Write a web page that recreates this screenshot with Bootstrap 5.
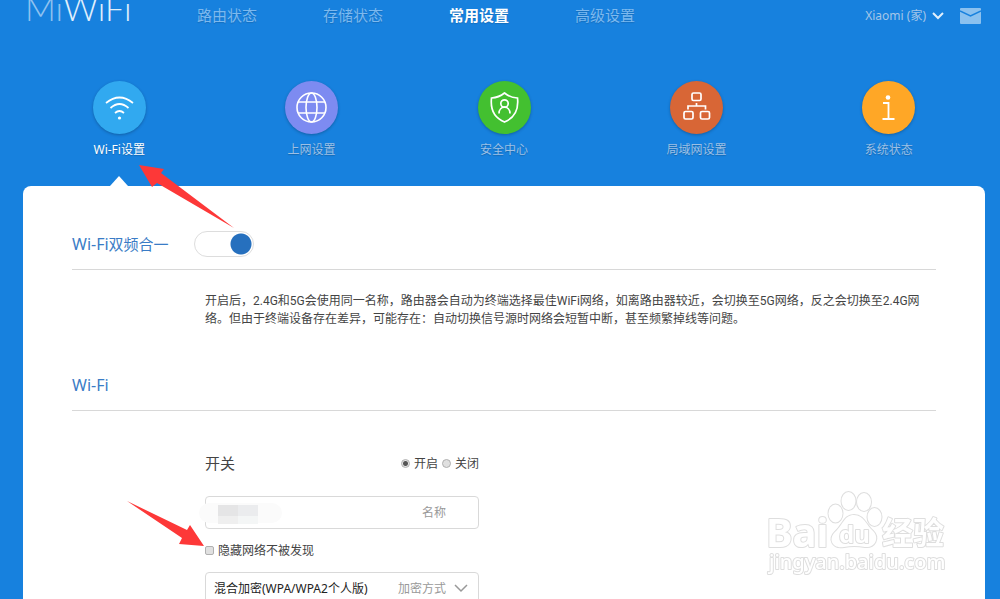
<!DOCTYPE html>
<html lang="zh-CN">
<head>
<meta charset="utf-8">
<meta name="viewport" content="width=device-width, initial-scale=1">
<title>MiWiFi</title>
<link href="https://cdn.jsdelivr.net/npm/bootstrap@5.3.0/dist/css/bootstrap.min.css" rel="stylesheet">
<style>
body { background: #1781de; font: 12px/18px "Noto Sans", "Noto Sans CJK SC", sans-serif; color: #444; min-height: 100vh; overflow-x: hidden; }
a { text-decoration: none; }
.topbar { height: 32px; overflow: hidden; padding: 0 19px 0 25px; }
.brand { width: 172px; font: 300 34px/24px Lato, sans-serif; color: #e0effc; white-space: nowrap; margin-top: -4px; }
.brand span { color: #8fc2f0; }
.mainnav { gap: 66px; font-size: 15px; line-height: 30px; }
.mainnav a { color: #7cb9ef; text-shadow: 0 1px 1px rgba(0,0,0,.15); }
.mainnav a.active { color: #fff; font-weight: 700; }
.account { color: #a5c6e8; gap: 16px; }
.account button { color: inherit; font-size: 12px; line-height: 18px; gap: 6px; }
.page { margin: 0 15px 0 23px; }
.tabs { padding-top: 49px; height: 154px; }
.tabs a { flex: 1 1 0; color: #9cc0e6; gap: 7px; text-shadow: 0 1px 1px rgba(0,0,0,.2); }
.tabs a.active { color: #fff; position: relative; }
.tabs a.active::after { content: ""; position: absolute; bottom: 0; border: 9px solid transparent; border-top: 0; border-bottom: 10px solid #fff; }
.disc { width: 53px; height: 53px; border-radius: 50%; box-shadow: 0 1px 3px rgba(0,0,0,.25); }
.disc svg { display: block; }
.c-wifi { background: #31a9f0; } .c-net { background: #7d8bf1; } .c-safe { background: #43c030; }
.c-lan { background: #d86636; } .c-info { background: #ffa726; }
.panel { background: #fff; border-radius: 8px 8px 0 0; padding: 33px 49px 40px; min-height: calc(100vh - 186px); }
.sect { height: 51px; border-bottom: 1px solid #d8d8d8; gap: 25px; }
.sect h2, .sect label { font-size: 15px; line-height: 22px; color: #3a7cc6; margin: 0; font-weight: 400; }
.sect .latin { font-size: 16px; }
.sect .form-check-input { width: 60px; height: 26px; margin: 0; border: 1px solid #ddd; border-radius: 13px; background: #fff radial-gradient(circle at 46px 12px, #2670be 10px, transparent 11px) 0 0 / 100% 100% no-repeat; }
.inset { padding-left: 133px; }
.desc { margin: 22px 0 32px; padding-right: 12px; font-family: Roboto, "Noto Sans CJK SC", sans-serif; }
.fields { width: 274px; }
.power { height: 24px; margin: 40px 0 21px; }
.power > span { font-size: 15px; }
.fields label { padding-top: 1px; }
.tiny { appearance: none; width: 9px; height: 9px; margin: 0 4px 0 0; border: 1px solid #b0b0b0; background: #e0e0e0; flex: none; }
.tiny[type=radio] { border-radius: 50%; }
.tiny[type=radio]:checked { background: radial-gradient(circle, #555 2px, #e4e4e4 3px); }
.tiny[type=checkbox] { border-radius: 2px; }
.field { height: 33px; border: 1px solid #d9d9d9; border-radius: 4px; position: relative; }
.field label { color: #999; white-space: nowrap; }
.field input, .field select { border: 0; background: none; appearance: none; font-size: 12px; color: #222; min-width: 0; outline: 0; padding: 1px 0 0 8px; }
.smudge { position: absolute; left: -7px; top: 6px; }
.arrow-a { position: absolute; left: 116px; top: -21px; }
.arrow-b { position: absolute; left: -79px; top: 50px; }
.mark-logo { position: fixed; right: 48px; bottom: 20px; pointer-events: none; }
</style>
</head>
<body>
<header class="topbar d-flex align-items-start">
  <a class="brand" href="#"><span>Mi</span>WiFi</a>
  <nav class="mainnav d-flex">
    <a href="#">路由状态</a><a href="#">存储状态</a><a href="#" class="active">常用设置</a><a href="#">高级设置</a>
  </nav>
  <div class="account d-flex align-items-center ms-auto h-100">
    <button type="button" class="btn p-0 border-0 d-flex align-items-center">Xiaomi (家)
      <svg width="12" height="8" fill="none" stroke="#e0effc" stroke-width="2"><path d="M1 1l5 5 5-5"/></svg>
    </button>
    <a href="#" aria-label="消息" class="d-flex"><svg width="21" height="16"><rect width="21" height="16" rx="1" fill="#8bc1ef"/><path d="M0 3l10.500 5L21 3" fill="none" stroke="#1781de" stroke-width="1.500"/></svg></a>
  </div>
</header>
<div class="page">
  <nav class="tabs d-flex">
    <a href="#" class="active d-flex flex-column align-items-center"><span class="disc c-wifi"><svg viewBox="0 0 53 53" fill="none" stroke="#fff" stroke-width="1.700"><path d="M13 22Q26.500 11 40 22M17.500 27Q26.500 19 35.500 27M22 32Q26.500 28 31 32"/><circle cx="26.500" cy="37" r="1.600" fill="#fff" stroke="none"/></svg></span>Wi-Fi设置</a>
    <a href="#" class="d-flex flex-column align-items-center"><span class="disc c-net"><svg viewBox="0 0 53 53" fill="none" stroke="#fff" stroke-width="1.600"><circle cx="26.500" cy="26.500" r="14.500"/><ellipse cx="26.500" cy="26.500" rx="5.500" ry="14.500"/><path d="M13 21H40M13 32H40"/></svg></span>上网设置</a>
    <a href="#" class="d-flex flex-column align-items-center"><span class="disc c-safe"><svg viewBox="0 0 53 53" fill="none" stroke="#fff" stroke-width="1.700"><path d="M26.500 12Q32 16.500 39.500 17Q41.500 35 26.500 41Q11.500 35 13.500 17Q21 16.500 26.500 12Z"/><circle cx="26.500" cy="22.500" r="3.700"/><path d="M21 32.500C21 24 32 24 32 32.500"/></svg></span>安全中心</a>
    <a href="#" class="d-flex flex-column align-items-center"><span class="disc c-lan"><svg viewBox="0 0 53 53" fill="none" stroke="#fff" stroke-width="1.700"><rect x="22" y="12" width="9" height="7.500" rx="1.500"/><rect x="14" y="30.500" width="9" height="7.500" rx="1.500"/><rect x="30.500" y="30.500" width="9" height="7.500" rx="1.500"/><path d="M18 28.500V25H35.500V28.500M26.500 25V22"/></svg></span>局域网设置</a>
    <a href="#" class="d-flex flex-column align-items-center"><span class="disc c-info"><svg viewBox="0 0 53 53" fill="none" stroke="#fff" stroke-width="1.800"><circle cx="26" cy="16.500" r="2.300" fill="#fff" stroke="none"/><path d="M21 22H26.500V38M20.500 38H32.500"/></svg></span>系统状态</a>
  </nav>
  <main class="panel position-relative">
    <svg class="arrow-a" width="96" height="64"><path d="M0 0L25 4 22 8 95 63 18 18 13 22Z" fill="#fd3838"/></svg>
    <div class="sect d-flex align-items-center">
      <label for="band"><span class="latin">Wi-Fi</span>双频合一</label>
      <input class="form-check-input" type="checkbox" role="switch" id="band" checked>
    </div>
    <p class="inset desc">开启后，2.4G和5G会使用同一名称，路由器会自动为终端选择最佳WiFi网络，如离路由器较近，会切换至5G网络，反之会切换至2.4G网络。但由于终端设备存在差异，可能存在：自动切换信号源时网络会短暂中断，甚至频繁掉线等问题。</p>
    <div class="sect d-flex align-items-center"><h2 class="latin">Wi-Fi</h2></div>
    <form class="inset">
      <div class="fields position-relative">
        <div class="power d-flex align-items-center">
          <span class="me-auto">开关</span>
          <input class="tiny" type="radio" name="power" id="on" checked><label for="on" class="me-1">开启</label>
          <input class="tiny" type="radio" name="power" id="off"><label for="off">关闭</label>
        </div>
        <div class="field d-flex align-items-center">
          <input class="flex-grow-1" type="text" id="ssid"><label for="ssid" class="pe-2 me-4">名称</label>
          <svg class="smudge" width="84" height="22"><rect width="83" height="20" rx="10" fill="#fbfbfb"/><path d="M19 2h20v11H19z" fill="#e5e5e6"/><path d="M39 2h20v11H39z" fill="#ebecee"/><path d="M19 13h20v8H19z" fill="#efefef"/><path d="M39 13h20v8H39z" fill="#f4f6f6"/></svg>
        </div>
        <div class="d-flex align-items-center my-2 py-1">
          <input class="tiny" type="checkbox" id="hide"><label for="hide">隐藏网络不被发现</label>
        </div>
        <div class="field d-flex align-items-center">
          <select class="flex-grow-1" id="enc"><option>混合加密(WPA/WPA2个人版)</option></select>
          <label for="enc">加密方式</label>
          <svg class="mx-2" width="16" height="9" fill="none" stroke="#999" stroke-width="1.500"><path d="M1 1l6 6 6-6"/></svg>
        </div>
        <svg class="arrow-b" width="80" height="48"><path d="M1 0L61 29 64 24 78 45 53 43 56 37Z" fill="#fd3838"/></svg>
      </div>
    </form>
  </main>
</div>
<svg class="mark-logo" width="188" height="90" fill="#fff" stroke="#dedede" stroke-width="2" paint-order="stroke" stroke-linejoin="round" font-family="'Noto Sans','Noto Sans CJK SC',sans-serif" font-weight="700">
  <g><ellipse cx="71.500" cy="24.500" rx="7" ry="9"/><ellipse cx="84.500" cy="12" rx="7" ry="9"/><ellipse cx="100" cy="13" rx="7" ry="9"/><ellipse cx="110.500" cy="28" rx="7" ry="9"/>
  <path d="M90 26C100 26 102 36 109 42C116 49 111 59 101 58Q90 56 80 58C68 60 64 50 71 43C79 36 80 26 90 26Z"/></g>
  <text x="2" y="58" font-size="40">Bai</text>
  <text x="75" y="54" font-size="24">du</text>
  <text x="118" y="55" font-size="31">经验</text>
  <text x="5" y="80" font-size="20" font-weight="500">jingyan.baidu.com</text>
</svg>
<script src="https://cdn.jsdelivr.net/npm/bootstrap@5.3.0/dist/js/bootstrap.bundle.min.js"></script>
</body>
</html>
